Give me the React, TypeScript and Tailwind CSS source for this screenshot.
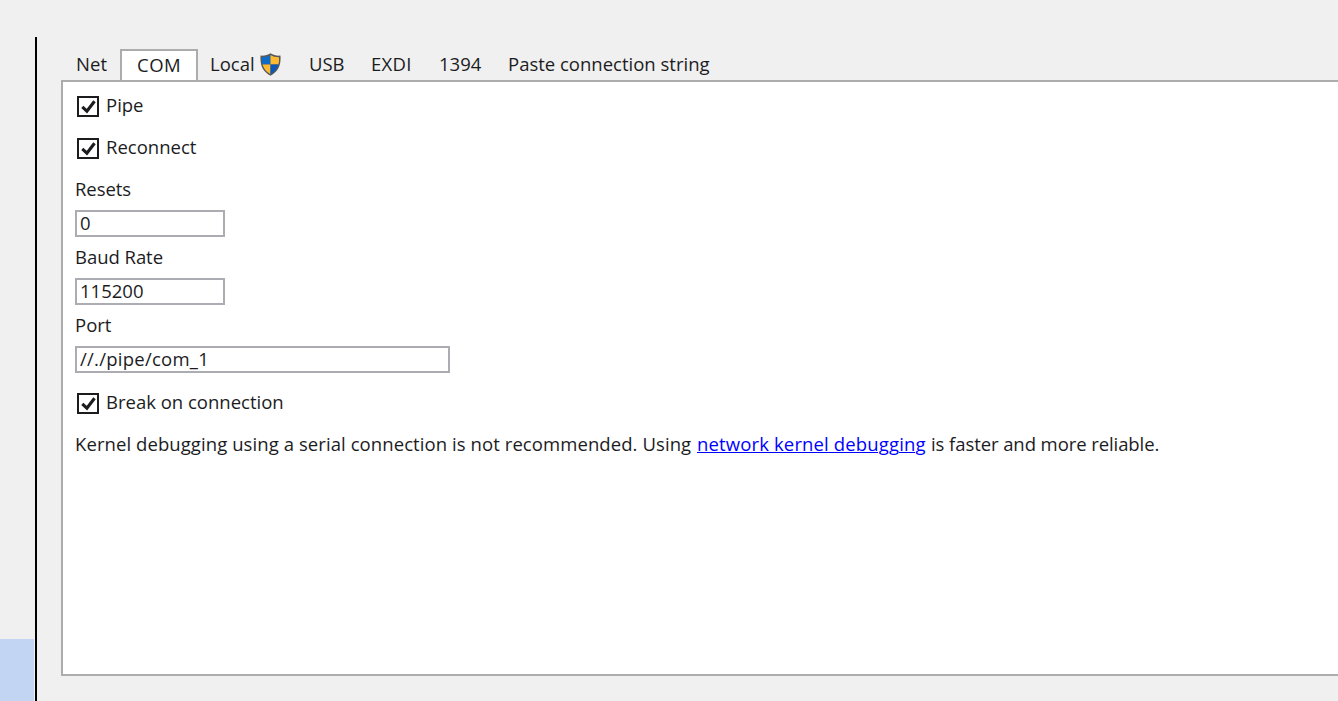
import { useState } from 'react';

function Shield() {
  return (
    <svg className="mt-px ml-px h-[23px] w-[21px]" viewBox="0 0 22 24" preserveAspectRatio="none">
      <defs>
        <clipPath id="shield-inner">
          <path d="M11 2.2C8.4 3.8 5.2 4.6 2.1 4.5C1.6 11.8 4 18 11 22C18 18 20.4 11.8 19.9 4.5C16.8 4.6 13.6 3.8 11 2.2Z" />
        </clipPath>
      </defs>
      <path d="M11 0.2C8.2 2.2 4.4 3 0.6 2.7C-0.3 12.4 2.8 19.6 11 23.8C19.2 19.6 22.3 12.4 21.4 2.7C17.6 3 13.8 2.2 11 0.2Z" fill="#56595b" />
      <g clipPath="url(#shield-inner)">
        <path d="M0 0H11V12H0Z" fill="#0e6cc9" />
        <path d="M11 0H22V12H11Z" fill="#fdb92f" />
        <path d="M0 12H11V24H0Z" fill="#fdb92f" />
        <path d="M11 12H22V24H11Z" fill="#0758b8" />
      </g>
    </svg>
  );
}

type CheckProps = { label: string; className: string; textClass?: string };

function Check({ label, className, textClass }: CheckProps) {
  const [checked, setChecked] = useState(true);
  return (
    <button
      type="button"
      role="checkbox"
      aria-checked={checked}
      onClick={() => setChecked(!checked)}
      className={`ml-0.5 flex items-start gap-[7px] text-left ${className}`}
    >
      <span className="mt-[3px] block h-[21px] w-[22px] shrink-0 border-2 border-[#1c1c1e] bg-white">
        {checked && (
          <svg className="block h-[17px] w-[18px]" viewBox="0 0 18 17" fill="none" stroke="#1c1c1e" strokeWidth="3.1">
            <path d="M3.3 8.9L7.9 13.2L15.5 3.2" />
          </svg>
        )}
      </span>
      <span className={textClass}>{label}</span>
    </button>
  );
}

type FieldProps = { label: string; value: string; labelClass?: string; inputClass: string };

function Field({ label, value, labelClass = '', inputClass }: FieldProps) {
  return (
    <label className="flex h-[68px] flex-col">
      <span className={`h-[33px] ${labelClass}`}>{label}</span>
      <input
        defaultValue={value}
        className={`h-[27px] border-2 border-[#abadb3] bg-white pb-0.5 pl-[3px] outline-none ${inputClass}`}
      />
    </label>
  );
}

export default function App() {
  return (
    <div className="flex h-[701px] w-[1338px] overflow-hidden bg-[#f0f0f0] font-['Open_Sans',sans-serif] text-[18.5px] leading-6 text-[#1c1c1e]">
      <aside className="flex w-[35px] shrink-0 flex-col justify-end">
        <div className="h-[62px] w-[34px] bg-[#c2d5f2]" />
      </aside>
      <div className="mt-[37px] w-0.5 shrink-0 bg-black" />
      <main className="ml-6 flex min-w-0 flex-1 flex-col pt-[49px]">
        <nav className="flex h-[31px] shrink-0 whitespace-nowrap">
          <span className="w-[59px] pt-[3px] pl-[15px] tracking-[0.15px]">Net</span>
          <span className="w-[78px] border-2 border-b-0 border-[#acacac] bg-white pt-0.5 pl-[15px] tracking-[0.5px]">COM</span>
          <span className="flex w-[111px] pt-[3px] pl-3">
            <span className="w-[49px]">Local</span>
            <Shield />
          </span>
          <span className="w-[62px] pt-[3px] tracking-[-0.1px]">USB</span>
          <span className="w-[68px] pt-[3px] tracking-[0.3px]">EXDI</span>
          <span className="w-[69px] pt-[3px]">1394</span>
          <span className="pt-[3px]">Paste connection string</span>
        </nav>
        <section className="flex h-[596px] flex-col items-start border-2 border-r-0 border-[#acacac] bg-white pt-[11px] pl-3">
          <Check label="Pipe" className="h-[42px]" />
          <Check label="Reconnect" className="h-[42px]" />
          <Field label="Resets" value="0" labelClass="tracking-[-0.08px]" inputClass="w-[150px]" />
          <Field label="Baud Rate" value="115200" labelClass="tracking-[-0.04px]" inputClass="w-[150px]" />
          <Field label="Port" value="//./pipe/com_1" inputClass="w-[375px] tracking-[0.25px]" />
          <Check label="Break on connection" className="mt-[9px] h-[42px]" />
          <p className="flex whitespace-nowrap">
            <span className="w-[622px] tracking-[0.08px]">
              Kernel debugging using a serial connection is not recommended. Using
            </span>
            <a href="#network" className="w-[234px] tracking-[0.14px] text-[#0000ff]">
              <span className="underline decoration-1 underline-offset-1">network kernel debugging</span>
            </a>
            <span className="tracking-[-0.08px]">is faster and more reliable.</span>
          </p>
        </section>
      </main>
    </div>
  );
}
